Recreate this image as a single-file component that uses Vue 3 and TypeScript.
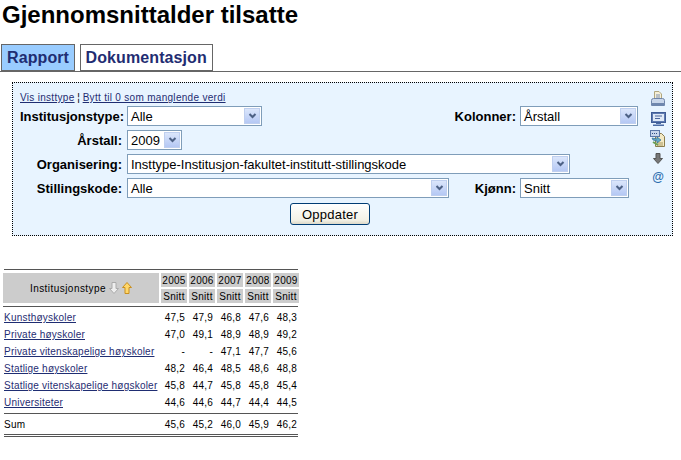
<script setup lang="ts">
interface Row { name: string; values: string[]; }
const years = ['2005', '2006', '2007', '2008', '2009'];
const rows: Row[] = [
  { name: 'Kunsthøyskoler', values: ['47,5', '47,9', '46,8', '47,6', '48,3'] },
  { name: 'Private høyskoler', values: ['47,0', '49,1', '48,9', '48,9', '49,2'] },
  { name: 'Private vitenskapelige høyskoler', values: ['-', '-', '47,1', '47,7', '45,6'] },
  { name: 'Statlige høyskoler', values: ['48,2', '46,4', '48,5', '48,6', '48,8'] },
  { name: 'Statlige vitenskapelige høgskoler', values: ['45,8', '44,7', '45,8', '45,8', '45,4'] },
  { name: 'Universiteter', values: ['44,6', '44,6', '44,7', '44,4', '44,5'] },
];
const sum = ['45,6', '45,2', '46,0', '45,9', '46,2'];
</script>

<template>
  <div class="page">
    <h1 class="title">Gjennomsnittalder tilsatte</h1>

    <div class="tabs">
      <a class="tab active">Rapport</a>
      <a class="tab">Dokumentasjon</a>
    </div>

    <section class="panel">
      <div class="form">
        <div class="links">
          <a class="link">Vis insttype</a><span class="sep"> ¦ </span><a class="link">Bytt til 0 som manglende verdi</a>
        </div>
        <div class="row">
          <label class="lbl">Institusjonstype:</label>
          <div class="sel w135"><span>Alle</span><i class="arrow"><svg width="9" height="6" viewBox="0 0 9 6"><path d="M1.500 1l3 3 3-3" fill="none" stroke="#4d6185" stroke-width="2"/></svg></i></div>
          <label class="lbl right">Kolonner:</label>
          <div class="sel w118"><span>Årstall</span><i class="arrow"><svg width="9" height="6" viewBox="0 0 9 6"><path d="M1.500 1l3 3 3-3" fill="none" stroke="#4d6185" stroke-width="2"/></svg></i></div>
        </div>
        <div class="row">
          <label class="lbl">Årstall:</label>
          <div class="sel w55"><span>2009</span><i class="arrow"><svg width="9" height="6" viewBox="0 0 9 6"><path d="M1.500 1l3 3 3-3" fill="none" stroke="#4d6185" stroke-width="2"/></svg></i></div>
        </div>
        <div class="row">
          <label class="lbl">Organisering:</label>
          <div class="sel w443"><span>Insttype-Institusjon-fakultet-institutt-stillingskode</span><i class="arrow"><svg width="9" height="6" viewBox="0 0 9 6"><path d="M1.500 1l3 3 3-3" fill="none" stroke="#4d6185" stroke-width="2"/></svg></i></div>
        </div>
        <div class="row">
          <label class="lbl">Stillingskode:</label>
          <div class="sel w322"><span>Alle</span><i class="arrow"><svg width="9" height="6" viewBox="0 0 9 6"><path d="M1.500 1l3 3 3-3" fill="none" stroke="#4d6185" stroke-width="2"/></svg></i></div>
          <label class="lbl right">Kjønn:</label>
          <div class="sel w109"><span>Snitt</span><i class="arrow"><svg width="9" height="6" viewBox="0 0 9 6"><path d="M1.500 1l3 3 3-3" fill="none" stroke="#4d6185" stroke-width="2"/></svg></i></div>
        </div>
        <div class="actions"><button class="btn" type="button">Oppdater</button></div>
      </div>

      <div class="tools">
        <svg class="t1" width="16" height="16" viewBox="0 0 16 16">
          <path d="M4.500.5h4.500l2.500 2.500v5.500h-7z" fill="#f6efd8" stroke="#b0a67f"/>
          <path d="M6 4h4M6 6h4" stroke="#7d8fb0"/>
          <path d="M1.500 9.500q0-2 2-2h9q2 0 2 2v3h-13z" fill="#c9d6ea" stroke="#6f84a8"/>
          <rect x="1" y="12" width="14" height="3" rx="1" fill="#6f86ad"/>
        </svg>
        <svg class="t2" width="15" height="14" viewBox="0 0 15 14">
          <rect x=".5" y=".5" width="14" height="10" fill="#5e7ab0" stroke="#3f5c96"/>
          <rect x="2" y="2" width="11" height="7" fill="#dfe9f7"/>
          <path d="M4 4h7M4 6.500h5" stroke="#4b659b"/>
          <path d="M5 11h5v1H5zM2 12.500h11V14H2z" fill="#4b6ba5"/>
        </svg>
        <svg class="t3" width="16" height="17" viewBox="0 0 16 17">
          <path d="M5.500 3.500h6l3 3v10h-9z" fill="#f3e9c4" stroke="#8a7d4e"/>
          <path d="M7 13h6M7 15h6" stroke="#a99a63"/>
          <rect x=".5" y=".5" width="9" height="6" fill="#c6d5ec" stroke="#5a77a8"/>
          <path d="M2 3.500h1M4 3.500h1M6 3.500h1" stroke="#2f4f86"/>
          <path d="M2 8l5 1v-2l4 3-4 3v-2l-4-1z" fill="#62a8c9" stroke="#2f6f94" stroke-width=".7"/>
          <path d="M3 12l5 3" stroke="#6aa157" stroke-width="2"/>
        </svg>
        <svg class="t4" width="10" height="11" viewBox="0 0 10 11">
          <path d="M3 .5h4v5h2.500L5 10.500.5 5.500H3z" fill="#777" stroke="#555"/>
        </svg>
        <span class="at">@</span>
      </div>
    </section>

    <section class="report">
      <div class="rule full"></div>
      <div class="hcell corner">
        <span class="ctitle">Institusjonstype</span>
        <svg width="10" height="12" viewBox="0 0 10 12"><path d="M3 .5h4v6h2.500L5 11.500.5 6.500H3z" fill="#eee" stroke="#aaa"/></svg>
        <svg width="10" height="12" viewBox="0 0 10 12"><path d="M5 .5l4.500 5H7v6H3v-6H.5z" fill="#ffd76a" stroke="#c98f1e"/></svg>
      </div>
      <div v-for="y in years" :key="y" class="hcell year">{{ y }}</div>
      <div v-for="y in years" :key="y + 's'" class="hcell sub">Snitt</div>
      <div class="rule full mid"></div>
      <template v-for="r in rows" :key="r.name">
        <a class="cell name link">{{ r.name }}</a>
        <div v-for="(v, i) in r.values" :key="i" class="cell num">{{ v }}</div>
      </template>
      <div class="rule full sumtop"></div>
      <div class="cell name">Sum</div>
      <div v-for="(v, i) in sum" :key="i" class="cell num">{{ v }}</div>
      <div class="rule full double"></div>
    </section>
  </div>
</template>

<style>
html, body { margin: 0; background: #fff; }
</style>

<style scoped>
.page {
  width: 681px;
  height: 460px;
  overflow: hidden;
  font-family: "Liberation Sans", Arial, sans-serif;
  color: #000;
}
.title {
  margin: 0;
  padding: 0 0 0 2px;
  height: 44px;
  font-size: 24px;
  line-height: 29px;
  font-weight: bold;
}
.tabs {
  display: flex;
  gap: 4.500px;
  padding-left: 1px;
  height: 27px;
  border-bottom: 1px solid #666;
}
.tab {
  box-sizing: border-box;
  height: 27px;
  border: 1px solid #666;
  padding: 0 5px;
  font-size: 16px;
  font-weight: bold;
  line-height: 25px;
  letter-spacing: .1px;
  color: #1f2d72;
  background: #fff;
}
.tab.active { background: #99ccff; }
.panel {
  box-sizing: border-box;
  display: flex;
  width: 661px;
  height: 154px;
  margin: 10px 0 0 12px;
  padding: 8px 5px 0 7px;
  border: 1px dotted #000;
  background: #e8f4ff;
}
.form { width: 618px; }
.links {
  height: 15px;
  font-size: 10px;
  line-height: 13px;
  letter-spacing: .3px;
}
.link { color: #1f2d72; text-decoration: underline; }
.sep { color: #000; word-spacing: -.5px; }
.row {
  display: flex;
  align-items: center;
  height: 20px;
  margin-bottom: 4px;
}
.lbl {
  width: 102px;
  margin-right: 5px;
  text-align: right;
  font-size: 13px;
  font-weight: bold;
  white-space: nowrap;
}
.lbl.right { flex: 1; width: auto; margin-right: 4px; }
.sel {
  box-sizing: border-box;
  display: flex;
  align-items: center;
  justify-content: space-between;
  height: 20px;
  padding: 0 1px 0 3px;
  border: 1px solid #7f9db9;
  background: #fff;
  font-size: 13px;
}
.w135 { width: 135px; }
.w118 { width: 118px; }
.w55 { width: 55px; }
.w443 { width: 443px; }
.w322 { width: 322px; }
.w109 { width: 109px; margin-right: 9px; }
.arrow {
  display: flex;
  align-items: center;
  justify-content: center;
  width: 16px;
  height: 16px;
  border: 1px solid #bfcfef;
  box-sizing: border-box;
  background: linear-gradient(#dbe6fb, #b5c8f4);
}
.actions { display: flex; justify-content: center; padding: 1px 0 0 2px; }
.btn {
  box-sizing: border-box;
  width: 80px;
  height: 22px;
  padding: 0;
  border: 1px solid #003c74;
  border-radius: 3px;
  background: linear-gradient(#fff, #f3f1e6 80%, #dcd8c8);
  font-family: inherit;
  font-size: 13px;
  letter-spacing: .25px;
  color: #000;
}
.tools {
  display: flex;
  flex-direction: column;
  align-items: center;
  width: 16px;
  margin-left: 12px;
}
.tools svg { display: block; }
.t1 { margin-bottom: 5px; }
.t2 { margin-bottom: 4px; }
.t3 { margin-bottom: 6px; }
.t4 { margin-bottom: 7px; }
.at { color: #2f6fb0; font-size: 12px; font-weight: bold; line-height: 13px; }
.report {
  display: grid;
  grid-template-columns: 156px repeat(5, 26px);
  column-gap: 2px;
  margin: 33px 0 0 3px;
  width: 296px;
  font-size: 10px;
}
.full { grid-column: 1 / -1; }
.rule { height: 1px; margin: 0 1px; background: #555; }
.report > .rule:first-child { margin-bottom: 3px; }
.rule.mid { margin-top: 3px; margin-bottom: 2px; margin-left: 0; }
.rule.sumtop { margin-top: 2px; margin-bottom: 2px; }
.rule.double {
  height: 3px;
  margin-top: 1px;
  background: none;
  border-top: 1px solid #555;
  border-bottom: 1px solid #555;
  box-sizing: border-box;
}
.hcell {
  background: #ccc;
  display: flex;
  align-items: center;
  justify-content: center;
  height: 14px;
  letter-spacing: .3px;
}
.year { margin-bottom: 2px; }
.corner {
  grid-row: 2 / span 2;
  height: 30px;
  gap: 3px;
}
.ctitle { letter-spacing: .45px; }
.cell {
  height: 17px;
  line-height: 17px;
  white-space: nowrap;
}
.name { padding-left: 1px; letter-spacing: .22px; }
.num { text-align: right; padding-right: 2px; letter-spacing: .2px; }
</style>
